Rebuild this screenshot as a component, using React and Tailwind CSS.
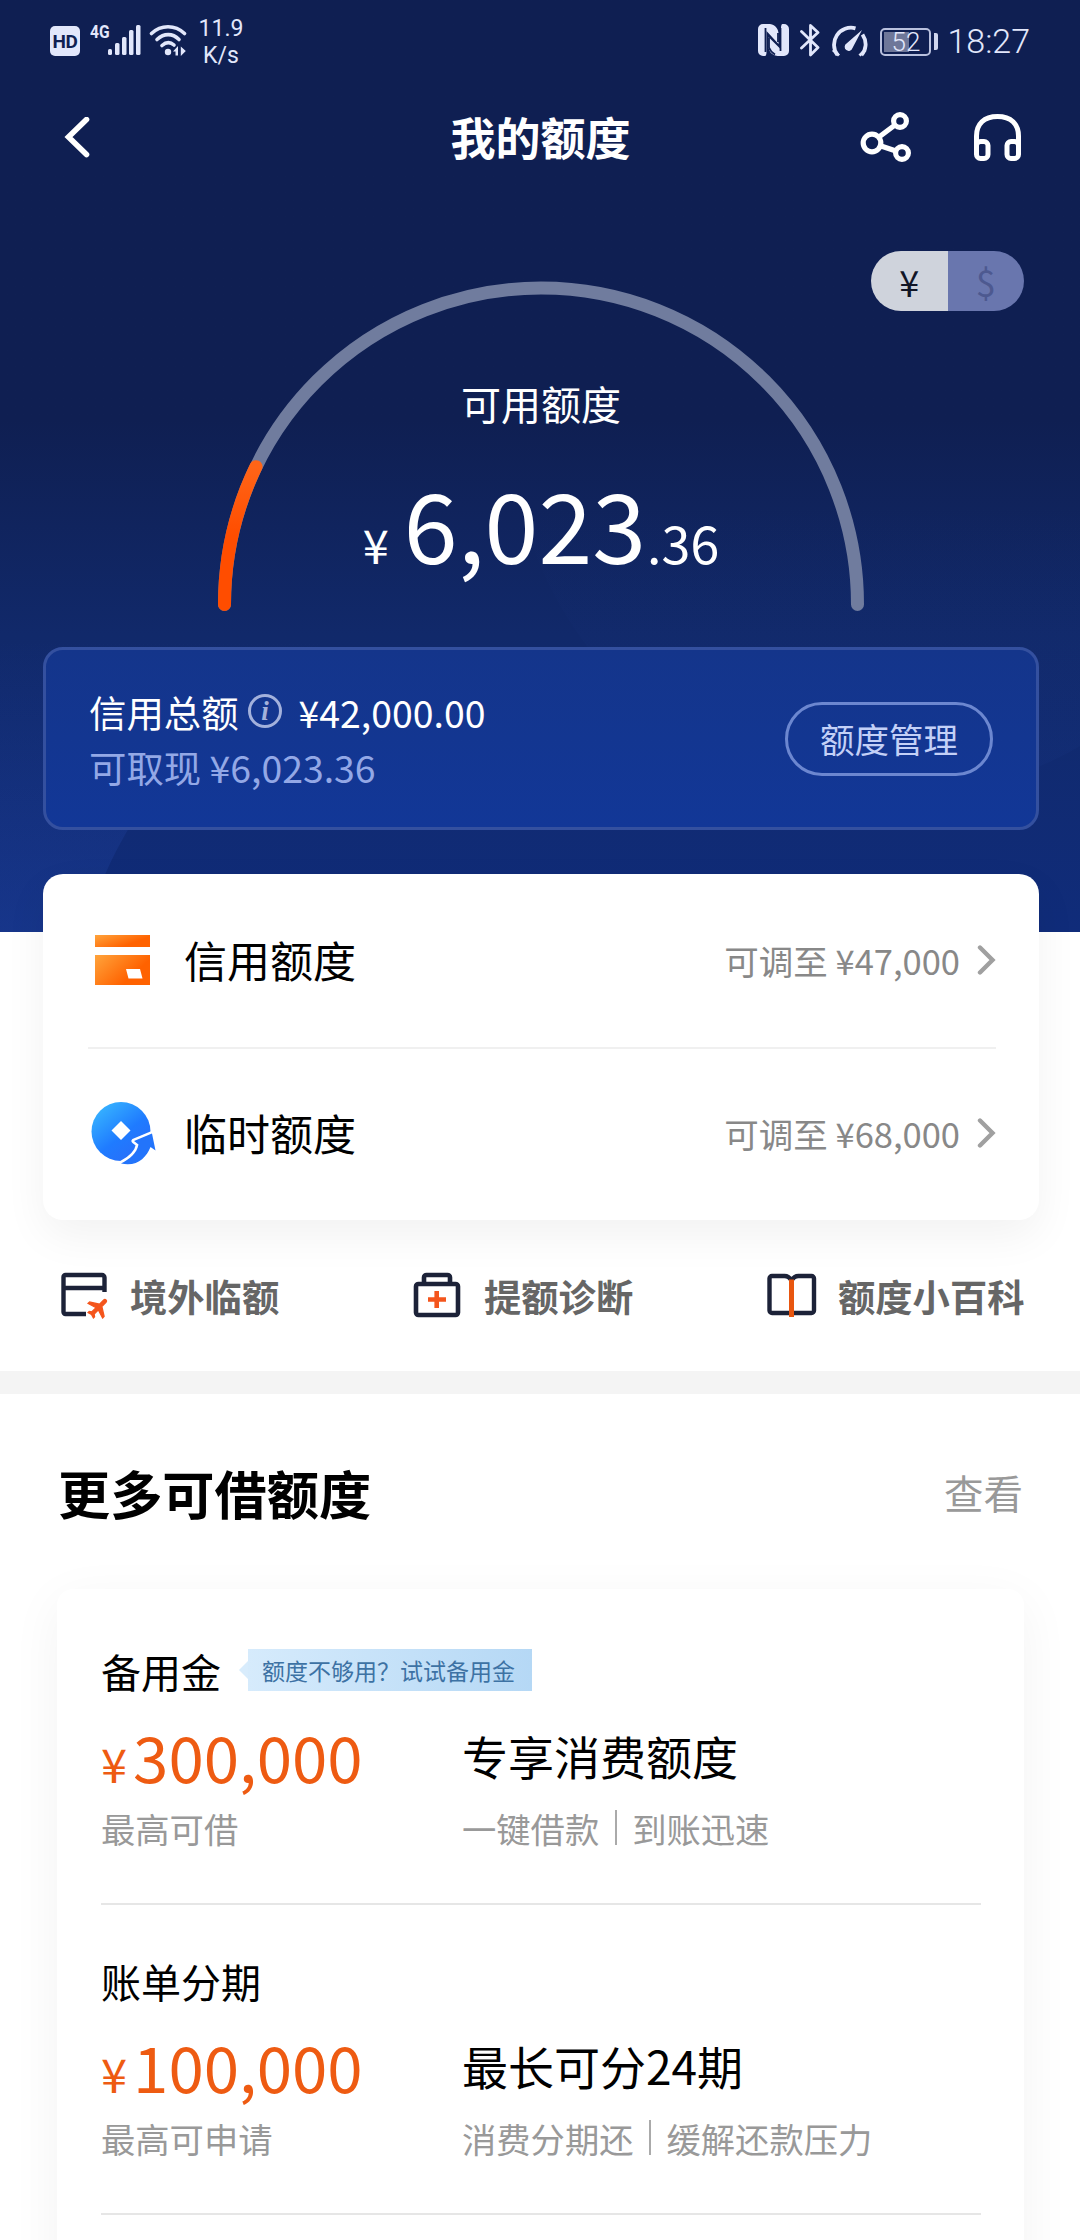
import { useState } from "react";

const accesos = [
  { id: "overseas", texto: "境外临额", Icono: OverseasIcon },
  { id: "diagnose", texto: "提额诊断", Icono: MedkitIcon },
  { id: "wiki", texto: "额度小百科", Icono: BookIcon },
];

const limites = [
  { id: "credit", nombre: "信用额度", monto: "¥47,000", Icono: CardIcon },
  { id: "temp", nombre: "临时额度", monto: "¥68,000", Icono: CoinIcon },
];

const productos = [
  {
    id: "reserve",
    nombre: "备用金",
    etiqueta: "额度不够用？试试备用金",
    monto: "300,000",
    nota: "最高可借",
    titulo: "专享消费额度",
    detalles: ["一键借款", "到账迅速"],
  },
  {
    id: "installment",
    nombre: "账单分期",
    monto: "100,000",
    nota: "最高可申请",
    titulo: "最长可分24期",
    detalles: ["消费分期还", "缓解还款压力"],
  },
];

function StatusBar() {
  return (
    <div className="flex h-[80px] items-start pl-[50px] pr-[50px] text-[#e2e7fb] font-['Roboto',sans-serif]">
      <div className="mt-[26px] flex h-[30px] w-[30px] items-center justify-center rounded-[5px] bg-[#e2e7fb] text-[19px] font-bold leading-none tracking-[-0.5px] text-[#0f1f52]">
        HD
      </div>
      <span className="ml-[10px] mt-[23px] w-[18px] origin-left scale-x-[0.82] text-[19px] font-bold leading-[18px]">
        4G
      </span>
      <svg className="mt-[24px]" width="34" height="32" fill="currentColor">
        <rect x="0" y="25" width="4" height="6" rx="1.5" />
        <rect x="7" y="19" width="4.500" height="12" rx="1.5" />
        <rect x="14" y="13" width="4.500" height="18" rx="1.5" />
        <rect x="21" y="6" width="4.500" height="25" rx="1.5" />
        <rect x="28" y="1" width="4.500" height="30" rx="1.5" />
      </svg>
      <svg
        className="ml-[7px] mt-[24px]"
        width="40"
        height="34"
        fill="none"
        stroke="currentColor"
        strokeWidth="3.6"
        strokeLinecap="round"
      >
        <path d="M2.5 9.5C12 .5 26 .5 35.500 9.500" />
        <path d="M8 15.500C15 9 23.500 9 30 15.500" />
        <path d="M13 21.500C17 18 21.500 18 25 21" />
        <circle cx="19" cy="28" r="3.2" fill="currentColor" stroke="none" />
        <path d="M24 27.500l5-5.500v9.500h-2.500v-4zM36.800 27l-5 5v-9.500z" fill="currentColor" stroke="none" />
      </svg>
      <div className="ml-[6px] mt-[15px] w-[52px] text-center text-[23px] leading-[27px]">
        11.9
        <br />
        K/s
      </div>

      <svg className="ml-auto mt-[24px]" width="32" height="33" fill="currentColor">
        <path d="M5 0H12C18 1 20 5 20.500 9V20L8.500 7V28C8.500 30 8 32 7 32H5a5 5 0 0 1-5-5V5a5 5 0 0 1 5-5z" />
        <path d="M26 32H19.500C13 31 11 27 10.500 23V13L23 25.500V4C23 2 23.500 0 24.500 0H26a5 5 0 0 1 5 5v22a5 5 0 0 1-5 5z" />
        <path d="M7.500 4v24M11 13.500v10c1 3 3 5 6 7M22.500 27V4M20 18V9" fill="none" stroke="#0f1f52" strokeWidth="1.800" />
      </svg>
      <svg
        className="ml-[10px] mt-[24px]"
        width="20"
        height="33"
        fill="none"
        stroke="currentColor"
        strokeWidth="2.8"
        strokeLinejoin="round"
        strokeLinecap="round"
      >
        <path d="M1.500 7.500L18 23.500l-7.500 7.500V1.500L18 8.500 1.500 24" />
      </svg>
      <svg className="ml-[10px] mt-[24px]" width="38" height="34" fill="none" stroke="currentColor" strokeWidth="3.8">
        <path d="M25.500 4.300A17 17 0 0 0 7.500 31M32.500 10.500C37.500 18 36 26 31.500 31" />
        <path d="M3 26l6 5.500M35.500 26l-6 5.500" strokeWidth="3" />
        <path d="M32 6L22.500 24a4 4 0 1 1-6-4.500z" fill="currentColor" stroke="none" />
      </svg>
      <div className="relative ml-[12px] mt-[28px] flex h-[28px] w-[51px] items-center justify-center rounded-[5px] border-2 border-[#b9c1de]">
        <div className="absolute left-[2px] top-[2px] h-[20px] w-[25px] bg-[#6e7799]" />
        <span className="relative text-[26px] font-light leading-none">52</span>
      </div>
      <div className="ml-[3px] mt-[33px] h-[17px] w-[4px] rounded-r-[2px] bg-[#d0d6ee]" />
      <span className="ml-[9px] mt-[21px] text-[34px] font-light leading-[40px]">18:27</span>
    </div>
  );
}

function NavBar() {
  return (
    <div className="relative flex h-[116px] items-center pl-[64px] pr-[58px] text-white">
      <svg width="28" height="42" fill="none" stroke="currentColor" strokeWidth="5.600" strokeLinecap="round" strokeLinejoin="miter">
        <path d="M22.500 2.500L4.500 20l18 17.500" />
      </svg>
      <h1 className="absolute inset-x-0 top-[27px] pl-px text-center text-[45px] font-bold leading-[60px]">
        我的额度
      </h1>
      <svg className="ml-auto" width="52" height="52" fill="none" stroke="currentColor" strokeWidth="5.200">
        <circle cx="12" cy="31" r="8.800" />
        <circle cx="40" cy="9" r="6.400" />
        <circle cx="42" cy="41" r="6.400" />
        <path d="M19 25L35 13M21 34l15 5" />
      </svg>
      <svg className="ml-[62px]" width="48" height="48" fill="none" stroke="currentColor" strokeWidth="5">
        <path d="M2.500 38V22C2.500 10 10 2.500 23.500 2.500S44.500 10 44.500 22v16" />
        <rect x="2.500" y="27.500" width="11.500" height="17" rx="4" />
        <rect x="33" y="27.500" width="11.500" height="17" rx="4" />
      </svg>
    </div>
  );
}

function Gauge() {
  return (
    <div className="relative mx-auto -mt-[34px] h-[336px] w-[650px] translate-x-px text-white">
      <svg className="absolute inset-0" width="650" height="336" fill="none" strokeWidth="13" strokeLinecap="round">
        <defs>
          <linearGradient id="arc" x1="0" y1="1" x2="0" y2="0">
            <stop offset="0.500" stopColor="#ff4d00" />
            <stop offset="1" stopColor="#ff6417" />
          </linearGradient>
        </defs>
        <path d="M8.500 327.500A316.500 316.500 0 0 1 641.500 327.500" stroke="#707c9e" />
        <path d="M8.500 327.500A316.500 316.500 0 0 1 40 189.700" stroke="url(#arc)" />
      </svg>
      <div className="relative flex flex-col items-center">
        <p className="mt-[98px] text-[40px] leading-[56px]">可用额度</p>
        <div className="mt-[36px] flex items-baseline leading-[110px]">
          <span className="text-[47px]">¥</span>
          <span className="ml-[15px] text-[97px]">6,023</span>
          <span className="ml-px text-[52px]">.36</span>
        </div>
      </div>
    </div>
  );
}

function CardIcon() {
  return (
    <svg width="66" height="66">
      <defs>
        <linearGradient id="naranja" x1="0" y1="0" x2="1" y2="0.600">
          <stop offset="0" stopColor="#ffa43c" />
          <stop offset="0.800" stopColor="#ff6200" />
        </linearGradient>
      </defs>
      <rect x="4" y="7" width="55" height="12" fill="url(#naranja)" />
      <path d="M4 27h55v30H4zM35 41l2.500 9.500h14L49 41z" fill="url(#naranja)" fillRule="evenodd" />
    </svg>
  );
}

function CoinIcon() {
  return (
    <svg width="66" height="66">
      <defs>
        <linearGradient id="azul" x1="0" y1="0" x2="0.800" y2="1">
          <stop offset="0" stopColor="#3cc0ff" />
          <stop offset="0.600" stopColor="#1f7bff" />
          <stop offset="1" stopColor="#2a6cf8" />
        </linearGradient>
      </defs>
      <circle cx="30" cy="30.500" r="29.500" fill="url(#azul)" />
      <path d="M30 20l9.500 9.500L30 39l-9.500-9.500z" fill="#fff" />
      <path
        d="M30 62.500C39 58 46 52 47.500 43.500L43 40 61 32.500l3.500 17-5-3.500C55 57 46 66 30 62.500z"
        fill="#fff"
        stroke="#fff"
        strokeWidth="5"
        strokeLinejoin="round"
      />
      <path
        d="M30 62.500C39 58 46 52 47.500 43.500L43 40 61 32.500l3.500 17-5-3.500C55 57 46 66 30 62.500z"
        fill="#2374fb"
      />
    </svg>
  );
}

function OverseasIcon() {
  return (
    <svg className="-mr-[2px] ml-[2px]" width="52" height="50" fill="none" stroke="#1c2238" strokeWidth="4.400">
      <path d="M43.500 21V6.500a2.500 2.500 0 0 0-2.500-2.500H4.500a2 2 0 0 0-2 2v35a2 2 0 0 0 2 2H25M2 17h42" />
      <g transform="translate(37 37) rotate(45) scale(1.080) translate(-11.500 -12.500)">
        <path
          d="M21 16v-2l-8-5V3.500c0-.83-.67-1.500-1.500-1.500S10 2.670 10 3.500V9l-8 5v2l8-2.500V19l-2 1.500V22l3.500-1 3.500 1v-1.500L13 19v-5.500l8 2.500z"
          fill="#f4551c"
          stroke="#f4551c"
          strokeWidth="1.200"
        />
      </g>
    </svg>
  );
}

function MedkitIcon() {
  return (
    <svg width="52" height="50" fill="none" stroke="#1c2238" strokeWidth="4.600">
      <rect x="3" y="13" width="42" height="31" rx="2.500" />
      <path d="M11 13V6.500A2.500 2.500 0 0 1 13.500 4h21A2.500 2.500 0 0 1 37 6.500V13" />
      <path d="M23.700 20v17M15 28.500h18" stroke="#f4551c" strokeWidth="4.600" />
    </svg>
  );
}

function BookIcon() {
  return (
    <svg width="52" height="50" fill="none" stroke="#1c2238" strokeWidth="4.400">
      <path d="M24.500 9.500C22.500 6 20.500 5 17.500 5H5a2.500 2.500 0 0 0-2.500 2.500v32A2.500 2.500 0 0 0 5 42h39.500a2.500 2.500 0 0 0 2.500-2.500v-32A2.500 2.500 0 0 0 44.500 5H31.500c-3 0-5 1-7 4.500z" />
      <path d="M24.500 8.500v37.500" stroke="#e8560f" strokeWidth="5" />
    </svg>
  );
}

function LimitRow({ limite }) {
  const { nombre, monto, Icono } = limite;
  return (
    <div className="flex h-[173px] items-center pl-[3px]">
      <Icono />
      <span className="-mt-[4px] ml-[27px] text-[43px] leading-[60px] text-black">{nombre}</span>
      <span className="-mt-[2px] ml-auto text-[34.500px] leading-[50px] text-[#888]">可调至 {monto}</span>
      <svg className="-mt-[2px] ml-[17px]" width="19" height="32" fill="none" stroke="#a0a0a0" strokeWidth="4.400" strokeLinecap="round">
        <path d="M3 3.500L15.500 16 3 28.500" />
      </svg>
    </div>
  );
}

function ProductRow({ producto }) {
  const { nombre, etiqueta, monto, nota, titulo, detalles } = producto;
  return (
    <div className="h-[310px] border-b-2 border-[#e6e6e6] pt-[46px]">
      <div className="flex h-[60px] items-center text-[40px] leading-[60px] text-black">
        {nombre}
        {etiqueta && (
          <div className="-mt-[3px] ml-[18px] flex items-center">
            <div className="h-0 w-0 border-y-[9px] border-r-[9px] border-y-transparent border-r-[#d8ecfc]" />
            <div className="h-[42px] w-[284px] bg-linear-to-r from-[#d6ebfc] to-[#b5d8f5] pl-[14px] text-[23px] leading-[42px] text-[#3d72a4]">
              {etiqueta}
            </div>
          </div>
        )}
      </div>
      <div className="mt-[14px] flex">
        <div className="w-[361px]">
          <div className="flex h-[80px] items-baseline leading-[80px] text-[#ee5b12]">
            <span className="text-[47px]">¥</span>
            <span className="ml-[6px] text-[63.600px]">{monto}</span>
          </div>
          <p className="mt-[8px] text-[34.300px] leading-[50px] text-[#999]">{nota}</p>
        </div>
        <div>
          <p className="pt-[4px] text-[46px] leading-[72px] text-black">{titulo}</p>
          <div className="mt-[12px] flex items-center text-[34.300px] leading-[50px] text-[#999]">
            {detalles[0]}
            <span className="mx-[15.500px] -mt-[2px] h-[35px] w-[2px] bg-[#aaa]" />
            {detalles[1]}
          </div>
        </div>
      </div>
    </div>
  );
}

export default function App() {
  const [moneda, setMoneda] = useState("CNY");

  const claseMoneda = (codigo) =>
    moneda === codigo
      ? "flex-1 bg-[#cfd3dc] text-[#111526]"
      : "flex-1 bg-[#6976ae] text-[#4d5990]";

  return (
    <div className="h-[2240px] w-[1080px] overflow-hidden bg-white font-['Noto_Sans_CJK_SC',sans-serif]">
      <header className="relative h-[932px] overflow-hidden bg-linear-to-b from-[#0f1f52] from-45% via-[#11296a] via-68% to-[#102c7a]">
        {/* formas decorativas del fondo */}
        <svg className="absolute inset-0" width="1080" height="932">
          <defs>
            <linearGradient id="brillo" x1="0" y1="0" x2="0" y2="1">
              <stop offset="0" stopColor="#2a55c8" stopOpacity="0" />
              <stop offset="1" stopColor="#2a50b8" stopOpacity="0.260" />
            </linearGradient>
            <linearGradient id="halo" x1="0" y1="0" x2="0" y2="1">
              <stop offset="0.600" stopColor="#3c64d2" stopOpacity="0" />
              <stop offset="1" stopColor="#3c64d2" stopOpacity="0.040" />
            </linearGradient>
          </defs>
          <path d="M0 640H330C220 700 120 800 85 932H0z" fill="url(#brillo)" />
          <circle cx="890" cy="417" r="380" fill="url(#halo)" />
        </svg>

        <div className="relative">
          <StatusBar />
          <NavBar />

          <div className="flex justify-end pr-[56px] pt-[55px]">
            <div className="flex h-[60px] w-[153px] overflow-hidden rounded-full text-[36px] leading-[60px]">
              <button onClick={() => setMoneda("CNY")} className={claseMoneda("CNY")}>
                ¥
              </button>
              <button onClick={() => setMoneda("USD")} className={claseMoneda("USD")}>
                $
              </button>
            </div>
          </div>

          <Gauge />

          <section className="ml-[43px] mt-[34px] flex h-[183px] w-[996px] items-center rounded-[20px] border-3 border-[#34509f] bg-linear-to-b from-[#14358b] to-[#123797] pl-[43px] pr-[43px]">
            <div className="pt-[2px] text-[37.400px] leading-[55px]">
              <div className="flex items-center text-white">
                信用总额
                <svg className="ml-[8px] mr-[16px] -mt-[3px]" width="36" height="36" fill="none">
                  <circle cx="18" cy="18" r="15.500" stroke="#a3b1dc" strokeWidth="3" />
                  <text
                    x="18"
                    y="26.500"
                    textAnchor="middle"
                    fill="#a3b1dc"
                    className="font-['Liberation_Serif',serif] text-[27px] font-bold italic"
                  >
                    i
                  </text>
                </svg>
                ¥42,000.00
              </div>
              <p className="text-[#93a8e6]">可取现 ¥6,023.36</p>
            </div>
            <button className="ml-auto h-[74px] w-[208px] rounded-full border-3 border-[#6c87d0] pb-[2px] text-[34.500px] leading-[64px] text-[#c3d0f7]">
              额度管理
            </button>
          </section>
        </div>
      </header>

      <section className="relative -mt-[58px] ml-[43px] w-[996px] rounded-[20px] bg-white pl-[45px] pr-[43px] shadow-[0_16px_44px_rgba(0,0,0,0.055)]">
        {limites.map((limite, i) => (
          <div key={limite.id} className="relative">
            {i > 0 && <div className="absolute inset-x-0 top-0 h-[2px] bg-[#f0f0f0]" />}
            <LimitRow limite={limite} />
          </div>
        ))}
      </section>

      <nav className="relative flex h-[151px] justify-between pl-[59px] pr-[55.500px] pt-[46px]">
        {accesos.map(({ id, texto, Icono }) => (
          <button key={id} className="flex h-[60px] items-center text-[37.300px] font-bold leading-[60px] text-[#666]">
            <Icono />
            <span className="ml-[19px]">{texto}</span>
          </button>
        ))}
      </nav>

      <div className="h-[23px] bg-[#f4f4f4]" />

      <main className="px-[57px]">
        <div className="flex h-[195px] items-center justify-between">
          <h2 className="ml-[1px] pt-[1px] text-[52.200px] font-bold leading-[70px] text-black">更多可借额度</h2>
          <span className="text-[39.500px] leading-[60px] text-[#999]">查看</span>
        </div>
        <section className="w-[967px] rounded-[16px] bg-white pl-[44px] pr-[43px] pb-20 pt-[6px] shadow-[0_12px_52px_rgba(0,0,0,0.050)]">
          {productos.map((producto) => (
            <ProductRow key={producto.id} producto={producto} />
          ))}
        </section>
      </main>
    </div>
  );
}
